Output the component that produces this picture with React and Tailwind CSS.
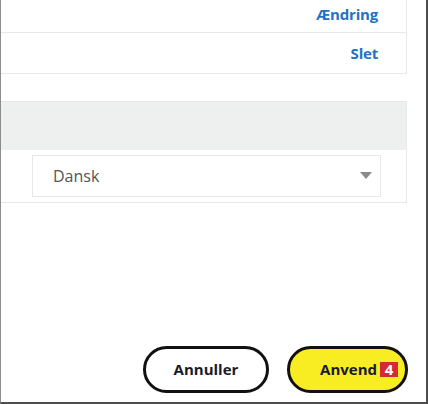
export default function App() {
  const font = { fontFamily: '"Open Sans", "Noto Sans", sans-serif' };
  return (
    <div
      className="w-[428px] h-[404px] bg-white border-l border-l-[#8c8c8c] border-r-2 border-r-[#4d4d4d] border-b-2 border-b-[#4d4d4d] flex flex-col overflow-hidden"
      style={font}
    >
      <div className="mr-[19px] -mt-px border border-l-0 border-[#e7e9e9]">
        <div className="h-[33px] flex items-center justify-end pr-[28px] pb-[3px] border-b border-[#e7e9e9]">
          <span className="text-[15px] font-bold text-[#2372c4] tracking-[-0.2px]">Ændring</span>
        </div>
        <div className="h-[40px] flex items-center justify-end pr-[28px]">
          <span className="text-[15px] font-bold text-[#2372c4] tracking-[-0.2px]">Slet</span>
        </div>
      </div>
      <div className="mt-[27px] mr-[19px] border border-l-0 border-[#e7e9e9]">
        <div className="h-[48px] bg-[#eef0ef]" />
        <div className="pt-[5px] pb-[5px] pl-[31px] pr-[25px]">
          <div className="h-[42px] border border-[#e7e9e9] flex items-center justify-between pl-[20px] pr-[8px]">
            <span className="text-[16px] text-[#555]">Dansk</span>
            <svg width="12" height="8" viewBox="0 0 12 8">
              <path d="M0 0 H12 L6 7 Z" fill="#8a8a8a" />
            </svg>
          </div>
        </div>
      </div>
      <div className="flex-1" />
      <div className="flex justify-end gap-[18px] pr-[18px] pb-[9px]">
        <button className="w-[126px] h-[47px] rounded-full border-[3px] border-[#111] bg-white flex items-center justify-center text-[15px] font-bold text-[#1a1a2a]">
          Annuller
        </button>
        <button className="w-[121px] h-[47px] rounded-full border-[3px] border-[#111] bg-[#f8ec22] flex items-center justify-end pr-[7px] gap-[3px] text-[15px] font-bold text-[#1a1a2a]">
          <span>Anvend</span>
          <span className="w-[18px] h-[15px] bg-[#d42a36] text-white text-[15px] font-bold leading-none flex items-center justify-center">4</span>
        </button>
      </div>
    </div>
  );
}
